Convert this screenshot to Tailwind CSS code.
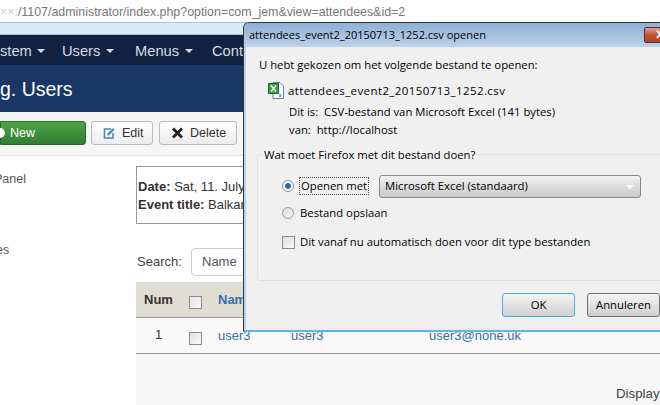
<!DOCTYPE html>
<html><head><meta charset="utf-8"><title>Attendees</title>
<script src="https://cdn.jsdelivr.net/npm/@tailwindcss/browser@4"></script></head>
<body class="m-0">
<div class="relative w-[660px] h-[405px] overflow-hidden bg-white font-['Liberation_Sans',sans-serif] text-[#333]">
  <div class="h-[22px] flex items-center text-[12.4px] pt-[2px] text-[#777] whitespace-nowrap bg-white"><span class="text-[#ccc]">××:</span><span>/1107/administrator/index.php?option=com_jem&amp;view=attendees&amp;id=2</span></div>
  <div class="h-[13px] bg-[#dce9f7] border-y border-[#a9bfd6]"></div>
  <nav class="h-[30px] bg-[#132240] text-[#d5dbe6] text-[14.7px] flex items-center whitespace-nowrap pt-[2px]">
    <span class="w-[62px] flex items-center gap-[5px]">stem<i class="w-0 h-0 border-x-4 border-t-4 border-x-transparent border-t-[#d5dbe6]"></i></span>
    <span class="w-[73px] flex items-center gap-[6px]">Users<i class="w-0 h-0 border-x-4 border-t-4 border-x-transparent border-t-[#d5dbe6]"></i></span>
    <span class="w-[77px] flex items-center gap-[6px]">Menus<i class="w-0 h-0 border-x-4 border-t-4 border-x-transparent border-t-[#d5dbe6]"></i></span>
    <span>Content</span>
  </nav>
  <div class="h-[47px] bg-[#1a3665] text-white text-[19.5px] flex items-center whitespace-nowrap pt-[3px]">g. Users</div>
  <div class="h-[44px] bg-[#f5f5f5] border-b border-[#e3e3e3] flex items-center gap-[5px] text-[12.5px] pb-[1px]">
    <div class="w-[86px] h-[24px] rounded-r-[3px] border border-[#25692b] bg-gradient-to-b from-[#4ea347] to-[#2e7f31] text-white flex items-center pl-[9px] relative"><i class="absolute -left-[6px] top-[6px] w-[10px] h-[10px] rounded-full bg-white"></i><span>New</span></div>
    <div class="w-[62px] h-[24px] rounded-[3px] border border-[#bbb] bg-gradient-to-b from-white to-[#ececec] flex items-center pl-[11px] gap-[7px]">
      <svg width="12" height="12" viewBox="0 0 12 12"><path d="M8 2H1.5v9H10V6" fill="none" stroke="#4a89a8" stroke-width="1.6"/><path d="M4.5 8.5V6.5L10 1l1.5 1.5L6 8.5z" fill="#4a89a8"/></svg><span>Edit</span></div>
    <div class="w-[78px] h-[24px] ml-[1px] rounded-[3px] border border-[#bbb] bg-gradient-to-b from-white to-[#ececec] flex items-center pl-[11px] gap-[6px]">
      <svg width="13" height="12" viewBox="0 0 13 12"><path d="M2 1.5l9 9M11 1.5l-9 9" stroke="#222" stroke-width="2.8"/></svg><span>Delete</span></div>
  </div>
  <div class="flex">
    <aside class="w-[136px] text-[12.5px] text-[#555] pt-[14px] shrink-0">
      <div class="-ml-[6px] h-[71px]">Panel</div>
      <div class="-ml-[4px]">es</div>
    </aside>
    <main class="flex-1 min-w-0 h-[250px] pt-[10px] text-[13px]">
      <div class="h-[58px] border border-[#999] bg-white px-[1px] pt-[11px] leading-[18px] whitespace-nowrap">
        <div><b>Date:</b> Sat, 11. July 2015</div>
        <div><b>Event title:</b> Balkan Festival</div>
      </div>
      <div class="h-[58px] flex items-end pb-[6px] gap-[10px] bg-white pl-[1px]">
        <span class="text-[#444] w-[44px] mb-[5px]">Search:</span>
        <span class="h-[28px] w-[200px] border border-[#ccc] rounded-[4px] pl-[10px] flex items-center text-[#555]">Name</span>
      </div>
      <div class="h-[36px] bg-[#e0ded3] border-b border-[#999] flex items-center whitespace-nowrap relative">
        <b class="w-[53px] pl-[8px]">Num</b>
        <input type="checkbox" class="appearance-none w-[13px] h-[13px] border border-[#8a8a8a] bg-gradient-to-br from-[#e4e4e4] to-[#f8f8f8] mt-[6px] ml-0 mr-[16px]">
        <b class="text-[#3071a9]">Name</b>
      </div>
      <div class="h-[36px] bg-[#f9f9f9] border-b border-[#999] flex items-center whitespace-nowrap text-[#3a6ea5]">
        <span class="w-[53px] pl-[19px] text-[#333] -mt-[1px]">1</span>
        <input type="checkbox" class="appearance-none w-[13px] h-[13px] border border-[#8a8a8a] bg-gradient-to-br from-[#e4e4e4] to-[#f8f8f8] mt-[6px] mr-[16px]">
        <span class="w-[73px] mt-[1px]">user3</span><span class="w-[138px] mt-[1px]">user3</span><span class="mt-[1px]">user3@none.uk</span>
      </div>
      <div class="h-[52px] bg-[#f6f6f6] text-right pt-[30px] text-[13.3px] text-[#444] whitespace-nowrap"><span class="inline-block w-[44px] text-left">Display</span></div>
    </main>
  </div>

  <!-- dialog window -->
  <section class="absolute left-[243px] top-[22px] w-[430px] h-[310px] rounded-t-[6px] border-t border-l border-[#33383f] border-b-[#5cb8e0] border-b-2 bg-[#b9d3ee] pl-[2px] flex flex-col font-['Open_Sans',sans-serif] text-[11.3px] text-black">
    <header class="h-[24px] shrink-0 -ml-[2px] pl-[5px] pt-[1px] rounded-tl-[5px] bg-gradient-to-b from-[#8fb0d3] to-[#bbd3ea] flex items-center whitespace-nowrap relative text-[11px]">attendees_event2_20150713_1252.csv openen
      <span class="absolute left-[400px] top-[4px] w-[30px] h-[16px] rounded-[2px] border border-[#5a2a30] bg-gradient-to-b from-[#dd9c8c] via-[#c4502f] to-[#b5432a] text-white font-bold text-[13px] leading-[13px] pl-[10px] font-['Liberation_Sans',sans-serif]">✕</span>
    </header>
    <div class="flex-1 bg-[#f0f0f0] pl-[11px] flex flex-col whitespace-nowrap">
      <p class="h-[18px] mt-[9px] ml-[2px] leading-[18px]">U hebt gekozen om het volgende bestand te openen:</p>
      <div class="flex items-center h-[17px] mt-[8px] ml-[11px] gap-[4px]">
        <svg width="16" height="17" viewBox="0 0 16 17" class="shrink-0"><path d="M5 .5h7l3.5 3.5v12.5H5z" fill="#fff" stroke="#5a7fa8"/><rect x=".5" y="1.5" width="10" height="10" fill="#3f9a3f" stroke="#1f6b2a"/><path d="M3 3.5l5 6M8 3.5l-5 6" stroke="#fff" stroke-width="1.4"/><path d="M11 12h2.5v3H11z" fill="#8aa8c8"/></svg>
        <span class="text-[11.5px] tracking-[0.4px]">attendees_event2_20150713_1252.csv</span>
      </div>
      <p class="h-[18px] mt-[4px] ml-[32px] leading-[18px]">Dit is:&nbsp; CSV-bestand van Microsoft Excel (141 bytes)</p>
      <p class="h-[18px] ml-[32px] leading-[18px]">van:&nbsp; http://localhost</p>
      <fieldset class="relative mt-[15px] h-[127px] w-[420px] border border-[#dce3ea] rounded-[3px] pl-[24px] flex flex-col">
        <span class="absolute -top-[9px] left-[5px] px-px bg-[#f0f0f0] leading-[18px]">Wat moet Firefox met dit bestand doen?</span>
        <div class="flex items-center h-[24px] mt-[19px]">
          <i class="w-[12px] h-[12px] rounded-full border border-[#8a8a8a] bg-white flex items-center justify-center"><i class="w-[6px] h-[6px] rounded-full bg-[#1f6fae]"></i></i>
          <span class="ml-[5px] h-[18px] leading-[16px] border border-dotted border-[#555] px-px">Openen met</span>
          <span class="ml-[10px] w-[262px] h-[23px] rounded-[3px] border border-[#888] bg-gradient-to-b from-[#f2f2f2] to-[#c9c9c9] flex items-center pl-[5px] relative">Microsoft Excel (standaard)<i class="absolute right-[6px] top-[9px] w-0 h-0 border-x-[4px] border-t-[4px] border-x-transparent border-t-white"></i></span>
        </div>
        <div class="flex items-center h-[18px] mt-[6px]">
          <i class="w-[12px] h-[12px] rounded-full border border-[#9a9a9a] bg-gradient-to-br from-[#ddd] to-[#f5f5f5]"></i>
          <span class="ml-[6px]">Bestand opslaan</span>
        </div>
        <div class="flex items-center h-[18px] mt-[11px]">
          <i class="w-[13px] h-[13px] border border-[#8a8a8a] bg-gradient-to-br from-[#ddd] to-[#f8f8f8]"></i>
          <span class="ml-[5px]">Dit vanaf nu automatisch doen voor dit type bestanden</span>
        </div>
      </fieldset>
      <div class="flex mt-[12px] ml-[245px] gap-[12px] text-center">
        <span class="w-[73px] h-[24px] rounded-[3px] border border-[#3fb4dc] bg-gradient-to-b from-[#f4f4f4] to-[#cfcfcf] leading-[22px]">OK</span>
        <span class="w-[73px] h-[24px] rounded-[3px] border border-[#707070] bg-gradient-to-b from-[#f4f4f4] to-[#cfcfcf] leading-[22px]">Annuleren</span>
      </div>
    </div>
  </section>
</div>
</body></html>
